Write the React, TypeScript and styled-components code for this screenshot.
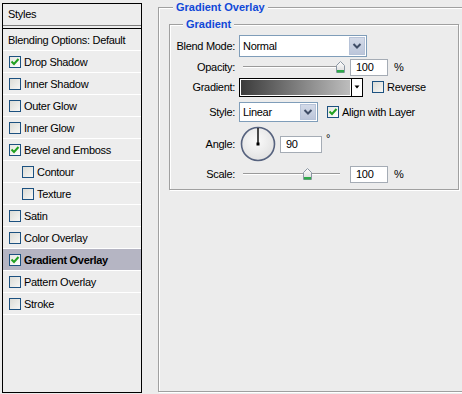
import React from 'react';
import styled, { createGlobalStyle } from 'styled-components';

const GlobalStyle = createGlobalStyle`
  html, body {
    margin: 0;
    padding: 0;
    background: #ececec;
  }
  body {
    font-family: Tahoma, "Liberation Sans", Arial, sans-serif;
    font-size: 11px;
    letter-spacing: -0.3px;
    color: #000;
  }
`;

const Page = styled.div`
  display: flex;
  align-items: flex-start;
  width: 462px;
  height: 394px;
  overflow: hidden;
`;

/* ---------- left: styles list ---------- */

const StylesPanel = styled.div`
  box-sizing: border-box;
  flex: none;
  width: 140px;
  height: 390px;
  margin: 3px 0 0 2px;
  border: 1px solid #000;
  background: #ededed;
`;

const PanelHeader = styled.div`
  height: 21px;
  line-height: 21px;
  padding-left: 5px;
  border-bottom: 1px solid #7c7c7c;
  margin-bottom: 2px;
`;

const StyleList = styled.div`
  border-top: 1px solid #000;
`;

const StyleRow = styled.div<{ $indent?: boolean; $selected?: boolean; $plain?: boolean }>`
  display: flex;
  align-items: center;
  gap: 3px;
  height: 21px;
  padding-left: ${({ $indent, $plain }) => ($plain ? 5 : $indent ? 19 : 6)}px;
  border-bottom: 1px solid #fff;
  background: ${({ $selected }) => ($selected ? '#b5b5c3' : 'transparent')};
  font-weight: ${({ $selected }) => ($selected ? 'bold' : 'normal')};
`;

const Box = styled.span<{ $checked?: boolean }>`
  box-sizing: border-box;
  display: inline-flex;
  align-items: center;
  justify-content: center;
  width: 12px;
  height: 12px;
  flex: none;
  border: 1px solid #1c5180;
  background: ${({ $checked }) =>
    $checked ? 'linear-gradient(135deg, #e6e6e0, #ffffff)' : 'linear-gradient(135deg, #dcdcd6, #f6f6f4)'};
`;

const CheckBox: React.FC<{ checked?: boolean }> = ({ checked }) => (
  <Box $checked={checked}>
    {checked && (
      <svg width="10" height="10" viewBox="0 0 10 10">
        <path d="M1.5 4.5 L4 7 L8.5 2" fill="none" stroke="#21a121" strokeWidth="2" />
      </svg>
    )}
  </Box>
);

const styleItems = [
  { name: 'Drop Shadow', checked: true },
  { name: 'Inner Shadow' },
  { name: 'Outer Glow' },
  { name: 'Inner Glow' },
  { name: 'Bevel and Emboss', checked: true },
  { name: 'Contour', indent: true },
  { name: 'Texture', indent: true },
  { name: 'Satin' },
  { name: 'Color Overlay' },
  { name: 'Gradient Overlay', checked: true, selected: true },
  { name: 'Pattern Overlay' },
  { name: 'Stroke' },
];

/* ---------- right: group boxes ---------- */

const OuterGroup = styled.div`
  position: relative;
  box-sizing: border-box;
  flex: none;
  width: 306px;
  height: 385px;
  margin: 7px 0 0 16px;
  padding: 16px 4px 0 10px;
  border: 1px solid #a0a0a0;
  box-shadow: inset 1px 1px 0 #fff, 1px 1px 0 #fff;
`;

const InnerGroup = styled.div`
  position: relative;
  box-sizing: border-box;
  height: 166px;
  padding: 9px 0 2px 0;
  border: 1px solid #a0a0a0;
  box-shadow: inset 1px 1px 0 #fff, 1px 1px 0 #fff;
`;

const Legend = styled.span<{ $left: number }>`
  position: absolute;
  top: -8px;
  left: ${({ $left }) => $left}px;
  padding: 0 3px;
  background: #ececec;
  color: #1048d8;
  font-weight: bold;
  line-height: 14px;
  letter-spacing: 0;
`;

const Row = styled.div<{ $h: number }>`
  display: grid;
  grid-template-columns: 65px 1fr;
  column-gap: 4px;
  align-items: center;
  height: ${({ $h }) => $h}px;
`;

const Label = styled.span`
  text-align: right;
`;

const Controls = styled.div`
  display: flex;
  align-items: center;
`;

const SelectBox = styled.div<{ $w: number }>`
  box-sizing: border-box;
  display: flex;
  align-items: center;
  width: ${({ $w }) => $w}px;
  height: ${({ $w }) => ($w > 100 ? 22 : 20)}px;
  border: 1px solid #7f9db9;
  background: #fff;
`;

const SelectText = styled.span`
  flex: 1;
  padding-left: 3px;
`;

const SelectButton = styled.span`
  box-sizing: border-box;
  display: flex;
  align-items: center;
  justify-content: center;
  width: 16px;
  height: calc(100% - 2px);
  margin-right: 1px;
  border: 1px solid #b7c3d8;
  background: linear-gradient(#d3dae8, #bcc6da);
`;

const Select: React.FC<{ value: string; width: number }> = ({ value, width }) => (
  <SelectBox $w={width}>
    <SelectText>{value}</SelectText>
    <SelectButton>
      <svg width="10" height="8" viewBox="0 0 10 8">
        <path d="M1.5 2 L5 5.5 L8.5 2" fill="none" stroke="#3f4d66" strokeWidth="2" />
      </svg>
    </SelectButton>
  </SelectBox>
);

const SliderWrap = styled.div`
  position: relative;
  width: 107px;
  height: 14px;
`;

const Track = styled.div`
  position: absolute;
  left: 4px;
  top: 6px;
  width: 97px;
  height: 1px;
  background: #9a9a9a;
  border-bottom: 1px solid #fff;
`;

const Thumb = styled.svg`
  position: absolute;
  top: 1px;
`;

const Slider: React.FC<{ value: number }> = ({ value }) => (
  <SliderWrap>
    <Track />
    <Thumb width="9" height="12" viewBox="0 0 9 12" style={{ left: 4 + value * 97 - 4.5 }}>
      <defs>
        <linearGradient id="tg" x1="0" y1="0" x2="0" y2="1">
          <stop offset="0" stopColor="#ffffff" />
          <stop offset="1" stopColor="#d8d8d8" />
        </linearGradient>
      </defs>
      <path d="M0.5 4.5 L4.5 0.5 L8.5 4.5 L8.5 11.5 L0.5 11.5 Z" fill="url(#tg)" stroke="#8a96a3" />
      <rect x="1" y="9" width="7" height="2.5" fill="#2eaa4a" />
    </Thumb>
  </SliderWrap>
);

const TextBox = styled.div<{ $w: number; $ml: number }>`
  box-sizing: border-box;
  width: ${({ $w }) => $w}px;
  height: 17px;
  margin-left: ${({ $ml }) => $ml}px;
  padding-left: 5px;
  line-height: 15px;
  border: 1px solid #a5acb5;
  background: #fff;
`;

const Unit = styled.span<{ $ml: number; $raise?: boolean }>`
  margin-left: ${({ $ml }) => $ml}px;
  align-self: ${({ $raise }) => ($raise ? 'flex-start' : 'center')};
  margin-top: ${({ $raise }) => ($raise ? '6px' : '0')};
`;

const GradientPicker = styled.div`
  box-sizing: border-box;
  display: flex;
  width: 124px;
  height: 19px;
  border: 1px solid #000;
  background: #fff;
`;

const GradientSwatch = styled.div`
  flex: 1;
  margin: 1px;
  background: linear-gradient(to right, #3c3c3c, #bdbdbd);
`;

const GradientArrow = styled.div`
  display: flex;
  align-items: center;
  justify-content: center;
  width: 10px;
  border-left: 1px solid #000;
`;

const InlineCheck = styled.label<{ $ml: number }>`
  display: flex;
  align-items: center;
  gap: 3px;
  margin-left: ${({ $ml }) => $ml}px;
`;

const Dial = styled.svg`
  margin-left: 1px;
  flex: none;
`;

export default function App() {
  return (
    <>
      <GlobalStyle />
      <Page>
        <StylesPanel>
          <PanelHeader>Styles</PanelHeader>
          <StyleList>
            <StyleRow $plain>Blending Options: Default</StyleRow>
            {styleItems.map((item) => (
              <StyleRow key={item.name} $indent={item.indent} $selected={item.selected}>
                <CheckBox checked={item.checked} />
                {item.name}
              </StyleRow>
            ))}
          </StyleList>
        </StylesPanel>

        <OuterGroup>
          <Legend $left={14}>Gradient Overlay</Legend>
          <InnerGroup>
            <Legend $left={13}>Gradient</Legend>

            <Row $h={24}>
              <Label>Blend Mode:</Label>
              <Controls>
                <Select value="Normal" width={128} />
              </Controls>
            </Row>

            <Row $h={18}>
              <Label>Opacity:</Label>
              <Controls>
                <Slider value={1} />
                <TextBox $w={38} $ml={4}>100</TextBox>
                <Unit $ml={6}>%</Unit>
              </Controls>
            </Row>

            <Row $h={22}>
              <Label>Gradient:</Label>
              <Controls>
                <GradientPicker>
                  <GradientSwatch />
                  <GradientArrow>
                    <svg width="6" height="4" viewBox="0 0 6 4">
                      <path d="M0.5 0.5 L5.5 0.5 L3 3.5 Z" fill="#000" />
                    </svg>
                  </GradientArrow>
                </GradientPicker>
                <InlineCheck $ml={9}>
                  <CheckBox />
                  Reverse
                </InlineCheck>
              </Controls>
            </Row>

            <Row $h={28}>
              <Label>Style:</Label>
              <Controls>
                <Select value="Linear" width={79} />
                <InlineCheck $ml={9}>
                  <CheckBox checked />
                  Align with Layer
                </InlineCheck>
              </Controls>
            </Row>

            <Row $h={36}>
              <Label>Angle:</Label>
              <Controls>
                <Dial width="36" height="36" viewBox="0 0 36 36">
                  <defs>
                    <radialGradient id="dg" cx="0.45" cy="0.4" r="0.6">
                      <stop offset="0" stopColor="#fbfbfb" />
                      <stop offset="1" stopColor="#e2e2e2" />
                    </radialGradient>
                  </defs>
                  <circle cx="18" cy="18" r="16.5" fill="url(#dg)" stroke="#56627e" strokeWidth="1.6" />
                  <line x1="18" y1="2" x2="18" y2="18" stroke="#000" strokeWidth="1.4" />
                  <rect x="16.5" y="16.5" width="3" height="3" fill="#000" />
                </Dial>
                <TextBox $w={42} $ml={4}>90</TextBox>
                <Unit $ml={4} $raise>°</Unit>
              </Controls>
            </Row>

            <Row $h={24}>
              <Label>Scale:</Label>
              <Controls>
                <Slider value={99 / 149} />
                <TextBox $w={38} $ml={4}>100</TextBox>
                <Unit $ml={6}>%</Unit>
              </Controls>
            </Row>
          </InnerGroup>
        </OuterGroup>
      </Page>
    </>
  );
}
